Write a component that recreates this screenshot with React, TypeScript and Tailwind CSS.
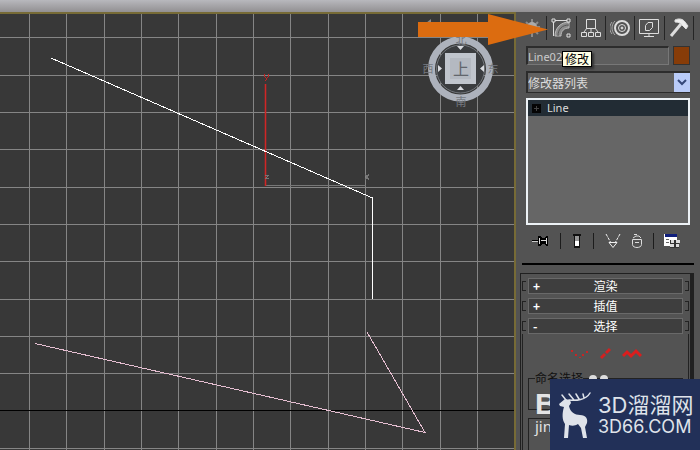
import type { ReactNode } from "react";

const gridX = [29, 66, 104, 141, 178, 216, 253, 290, 328, 365, 402, 440, 477];
const gridY = [37, 75, 112, 149, 187, 224, 261, 299, 336, 373, 448];

function Viewport() {
  return (
    <main className="relative min-w-0 flex-1 overflow-hidden border-t-2 border-r-2 border-[#776b36] bg-[#383838]">
      <svg className="absolute inset-0 h-full w-full" shapeRendering="crispEdges">
        <g transform="translate(0 -14)" fill="none">
          {gridX.map((x) => (
            <line key={x} x1={x + 0.5} x2={x + 0.5} y1="14" y2="2000" stroke="#858585" />
          ))}
          {gridY.map((y) => (
            <line key={y} x1="0" x2="100%" y1={y + 0.5} y2={y + 0.5} stroke="#858585" />
          ))}
          <line x1="0" x2="100%" y1="410.5" y2="410.5" stroke="#000" />

          {/* Axis tripod */}
          <path d="M266 185.5H366" stroke="#777" />
          <rect x="264" y="84" width="3" height="102" fill="#c42424" opacity="0.3" />
          <rect x="265" y="84" width="1" height="102" fill="#d02626" />
          <path
            d="M264 74h1v3h-1zM268 74h1v3h-1zM265 77h1v1h-1zM267 77h1v1h-1zM266 78h1v2h-1zM265 80h1v1h-1z"
            fill="#c42424"
          />
          <path
            d="M265 175h4v1h-4zM267 176h1v1h-1zM266 177h1v1h-1zM265 178h4v1h-4z"
            fill="#777"
          />
          <path d="M365 174l4 6M369 174l-4 6" stroke="#777" />

          {/* Splines */}
          <path d="M51 58L372.5 198V299" stroke="#fff" />
          <path d="M35 343.5L425 432.5L367 332" stroke="#e6bfd2" />
        </g>
      </svg>
    </main>
  );
}

function ViewCube() {
  return (
    <svg
      className="absolute top-4 left-[412px] h-24 w-24"
      viewBox="412 16 96 96"
      fontFamily='"Noto Sans CJK SC", sans-serif'
      textAnchor="middle"
    >
      <circle cx="460.5" cy="69" r="29" fill="none" stroke="#adb2bc" strokeWidth="7" />
      <circle cx="460.5" cy="69" r="24" fill="#3b3d40" stroke="#72767c" />
      <g fill="#767a81" fontSize="11">
        <text x="428" y="73">西</text>
        <text x="493" y="73">东</text>
        <text x="461" y="106">南</text>
        <text x="461" y="44">北</text>
      </g>
      <path d="M457 46h7l-3.5 4zM457 90h7l-3.5-4zM438 65v7l4-3.5zM484 65v7l-4-3.5z" fill="#d9dbe0" />
      <rect x="445" y="53" width="31" height="31" fill="#c0c5cd" />
      <rect x="450" y="58" width="21" height="21" fill="#b4b9c1" />
      <text x="461" y="75" fill="#62666c" fontSize="16">
        上
      </text>
      <path d="M431 19v5l-5-1z" fill="#888" />
    </svg>
  );
}

const tabs: { name: string; icon: ReactNode }[] = [
  {
    name: "创建",
    icon: (
      <>
        <path d="M10 1v18M4 4l12 12M16 4L4 16M2 9h16" stroke="#8a8a8a" strokeWidth="2" />
        <circle cx="10" cy="9" r="5" fill="#aaa" stroke="none" />
      </>
    ),
  },
  {
    name: "修改",
    icon: (
      <>
        <path d="M4 18C4 10 10 4 18 4v6c-5 0-8 3-8 8z" fill="#8c8c8c" stroke="#bbb" />
        <path d="M7 18C7 11 11 7 18 7" stroke="#555" />
        <path d="M2.5 18V2.5H18" />
        <path d="M1 1h3v3H1zM16 1h3v3h-3zM16 16h3v3h-3z" fill="#555" />
      </>
    ),
  },
  {
    name: "层次",
    icon: (
      <>
        <path d="M5.5 1.5h9v9h-9zM.5 14.5h5v4h-5zM7.5 14.5h5v4h-5zM14.5 14.5h5v4h-5z" />
        <path d="M10 10v4M6 10l-3 4M14 10l3 4" />
      </>
    ),
  },
  {
    name: "运动",
    icon: (
      <>
        <circle cx="12" cy="10" r="7" strokeWidth="2" />
        <circle cx="12" cy="10" r="3.5" />
        <circle cx="12" cy="10" r="1" fill="#e0e0e0" />
        <path d="M5 3c-4 4-4 10 0 14M2 4c-3 4-3 8 0 12" stroke="#aaa" />
      </>
    ),
  },
  {
    name: "显示",
    icon: (
      <>
        <path d="M.5 1.5h19v14H.5zM5 18.5h10M10 16v2" />
        <path d="M9 4.5h4.5v5l-3 3h-4v-5z" />
      </>
    ),
  },
  {
    name: "工具",
    icon: (
      <>
        <path d="M2 18L12 6" strokeWidth="3" />
        <path d="M6 2c4-2 8-1 10 2l3 4-2 3-4-4c-1-2-4-3-7-3z" fill="#eee" />
      </>
    ),
  },
];

function CommandTabs() {
  return (
    <nav className="flex h-6">
      {tabs.map((tab) => (
        <button
          key={tab.name}
          aria-label={tab.name}
          className="flex h-6 flex-1 items-center justify-center border-r border-[#252525]"
        >
          <svg className="h-5 w-5" viewBox="0 0 20 20" fill="none" stroke="#dedede">
            {tab.icon}
          </svg>
        </button>
      ))}
    </nav>
  );
}

function StackTools() {
  return (
    <div className="mt-2 flex h-4 items-center justify-between pr-2.5 pl-1">
      <button aria-label="锁定堆栈">
        <svg className="block h-4 w-5" viewBox="0 0 20 16" shapeRendering="crispEdges">
          <path d="M2 7h6v1H2z" fill="#000" />
          <path d="M2 8h6v1H2z" fill="#ccc" />
          <path d="M8 3h3l1 2h3l1-2h2v10h-2l-1-2h-3l-1 2H8z" fill="#000" />
          <path d="M9 5h1v6H9zM11 7h5v1h-5zM16 5h1v6h-1z" fill="#ddd" />
        </svg>
      </button>
      <span className="h-4 w-px bg-[#1c1c1c]" />
      <button aria-label="显示最终结果">
        <svg className="block h-4 w-3" viewBox="0 0 12 16" shapeRendering="crispEdges">
          <path d="M2 1h8v2H9v12H3V3H2z" fill="#111" />
          <path d="M4 3h4v5H4z" fill="#999" />
          <path d="M4 8h4v5H4z" fill="#fff" />
        </svg>
      </button>
      <span className="h-4 w-px bg-[#1c1c1c]" />
      <button aria-label="使唯一">
        <svg className="block h-4 w-4" viewBox="0 0 16 16" fill="none" stroke="#f0f0f0">
          <path d="M1 1l5 9M15 1l-5 9" strokeDasharray="3 1" />
          <path d="M4 9.5h8l-4 5z" />
        </svg>
      </button>
      <button aria-label="移除修改器">
        <svg className="block h-4 w-3" viewBox="0 0 12 16" fill="none" stroke="#ddd">
          <path d="M1.5 6.5h9v5c0 4-9 4-9 0zM4 9.500h4M2 5l3-2h3l2 2M3 1.5h3" />
        </svg>
      </button>
      <span className="h-4 w-px bg-[#1c1c1c]" />
      <button aria-label="配置修改器集">
        <svg className="block h-4 w-4" viewBox="0 0 16 16" shapeRendering="crispEdges">
          <path d="M0 1h13v12H0z" fill="#fff" />
          <path d="M1 1h12v3H1z" fill="#101f7c" />
          <path d="M2 6h3v1H2zM2 9h3v1H2z" fill="#666" />
          <path d="M6 7h9v8H6z" fill="#333" />
          <path d="M7 7h3v3H7zM12 7h4v3h-4zM6 11h4v3H6zM12 11h3v3h-3z" fill="#ddd" />
        </svg>
      </button>
    </div>
  );
}

function Rollout({ title, open }: { title: string; open?: boolean }) {
  return (
    <div className="flex items-center gap-0.5">
      <span className="h-2.5 w-1 border-y border-l border-[#222]" />
      <button className="relative h-4 flex-1 border border-[#696969] bg-[#3e3e3e] text-center text-xs leading-[14px] text-white">
        <span className="absolute left-1 font-bold">{open ? "-" : "+"}</span>
        {title}
      </button>
      <span className="h-2.5 w-1 border-y border-r border-[#222]" />
    </div>
  );
}

function Watermark() {
  return (
    <div className="absolute right-0 bottom-0 flex h-[71px] w-[150px] items-center gap-1 bg-[#223058] pl-2 text-[#dfe3ea]">
      <svg className="h-12 w-9 shrink-0" viewBox="0 0 36 48" fill="none" stroke="#dfe3ea" strokeLinecap="round">
        <path
          d="M1 13l6-5 5 1 1 3-2 3c1 6 6 9 11 9 6 0 8 4 7 8l-2 4 2 11h-4l-2-10-3-4c-3 2-6 2-9 1l-1 13H6l1-14C4 29 4 22 6 16l-4-1z"
          fill="#dfe3ea"
          stroke="none"
        />
        <path d="M11 9C18 10 28 9 32 2M16 9l-5-6M21 8l-3-5M26 7l-1-4M8 9L4 4" strokeWidth="1.5" />
      </svg>
      <div className="whitespace-nowrap">
        <div className="font-['Inter','Noto_Sans_CJK_SC',sans-serif] text-[22px] leading-6">3D溜溜网</div>
        <div className="font-['Inter',sans-serif] text-lg leading-5">3D66.COM</div>
      </div>
    </div>
  );
}

function CommandPanel() {
  return (
    <aside className="relative flex w-[184px] shrink-0 flex-col overflow-hidden bg-[#535353] pt-1">
      <div className="pr-1.5 pl-0.5">
        <CommandTabs />
      </div>

      <div className="px-2.5 pt-1.5">
        <div className="flex gap-1">
          <input
            aria-label="名称"
            defaultValue="Line02"
            className="h-[19px] min-w-0 flex-1 border-t-2 border-r border-b border-l-2 border-[#2c2c2c] border-r-[#777] border-b-[#777] bg-[#5e5e5e] font-['Noto_Sans',sans-serif] text-[11px] text-[#ccc]"
          />
          <button aria-label="颜色" className="h-[19px] w-[17px] border border-[#333] bg-[#873c08]" />
        </div>
        <div className="relative mt-1.5">
          <select
            aria-label="修改器列表"
            className="block h-[22px] w-full appearance-none border-t-2 border-b border-l-2 border-[#2c2c2c] bg-[#626262] text-xs text-[#ddd]"
          >
            <option>修改器列表</option>
          </select>
          <svg className="pointer-events-none absolute top-0.5 right-0 h-[19px] w-4" viewBox="0 0 16 19">
            <rect width="16" height="19" fill="#b9cbf8" />
            <path d="M4 7l4 4 4-4" fill="none" stroke="#344779" strokeWidth="2" />
          </svg>
        </div>
        <ul className="mt-[5px] h-[127px] border-2 border-[#edf2f6] bg-[#666]">
          <li className="flex h-4 items-center gap-1.5 bg-[#222c34] pl-1 font-['Noto_Sans',sans-serif] text-[11px] text-[#ddd]">
            <svg className="h-[9px] w-[9px]" viewBox="0 0 9 9">
              <rect width="9" height="9" fill="#050505" />
              <path d="M2 4.5h5M4.5 2v5" stroke="#444" />
            </svg>
            Line
          </li>
        </ul>
        <StackTools />
      </div>

      <hr className="mx-1.5 mt-3.5 border-t-2 border-black" />

      <div className="mt-2 mr-1.5 ml-1 flex flex-1 flex-col border-t border-r-4 border-l border-[#202020] px-px pt-1">
        <div className="flex flex-col gap-1">
          <Rollout title="渲染" />
          <Rollout title="插值" />
          <Rollout title="选择" open />
        </div>
        <div className="flex flex-1 flex-col border-x border-[#222] px-[5px]">
          <div className="flex h-9 items-center justify-center gap-2 pt-1">
            <button aria-label="顶点">
              <svg className="block h-4 w-5" viewBox="0 0 20 16" fill="#c82424">
                <path d="M1 4h2v2H1zM5 8h2v2H5zM9 11h2v1H9zM12 8h2v2h-2zM16 5h2v2h-2z" />
              </svg>
            </button>
            <button aria-label="线段">
              <svg className="block h-4 w-4" viewBox="0 0 16 16" stroke="#d32020" strokeWidth="3">
                <path d="M3 12l4-4M8 7l4-4" />
              </svg>
            </button>
            <button aria-label="样条线">
              <svg className="block h-4 w-5" viewBox="0 0 20 16" fill="none" stroke="#dc1d1d" strokeWidth="3">
                <path d="M1 10l4-4 4 4 5-5 5 5" />
              </svg>
            </button>
          </div>
          <fieldset className="h-10 border border-[#222] pl-1.5">
            <legend className="text-xs leading-4 text-[#101010]">命名选择</legend>
          </fieldset>
          <div className="mt-2 flex-1 border border-b-0 border-[#222]" />
        </div>
      </div>

      <div className="absolute bottom-4 left-[19px] text-[#e4e4e4]">
        <div className="font-['Liberation_Sans',sans-serif] text-[30px] leading-7 font-bold">Bai</div>
        <div className="font-['Noto_Sans',sans-serif] text-[15px] leading-4">jingyan</div>
      </div>
      <svg className="absolute right-[92px] bottom-[68px] h-2 w-5" viewBox="0 0 20 8" fill="#ddd">
        <circle cx="5" cy="5" r="4" />
        <circle cx="16" cy="5" r="4" />
      </svg>
      <Watermark />
    </aside>
  );
}

export default function App() {
  return (
    <div className="relative flex min-h-screen flex-col bg-[#535353] font-['Noto_Sans_CJK_SC',sans-serif]">
      <header className="h-3 bg-linear-to-b from-[#b8b8bd] to-[#929092]" />
      <div className="flex flex-1">
        <Viewport />
        <CommandPanel />
      </div>

      <ViewCube />
      <svg className="absolute top-3.5 left-[418px] h-8 w-[130px]" viewBox="0 0 130 32">
        <path d="M0 8h70V0l60 15.5L70 31v-8H0z" fill="#dc6c10" />
      </svg>
      <div
        role="tooltip"
        className="absolute top-[51px] left-[562px] border border-black bg-[#ffffe5] px-0.5 text-xs leading-[14px] text-black shadow-[2px_2px_2px_#333]"
      >
        修改
      </div>
    </div>
  );
}
